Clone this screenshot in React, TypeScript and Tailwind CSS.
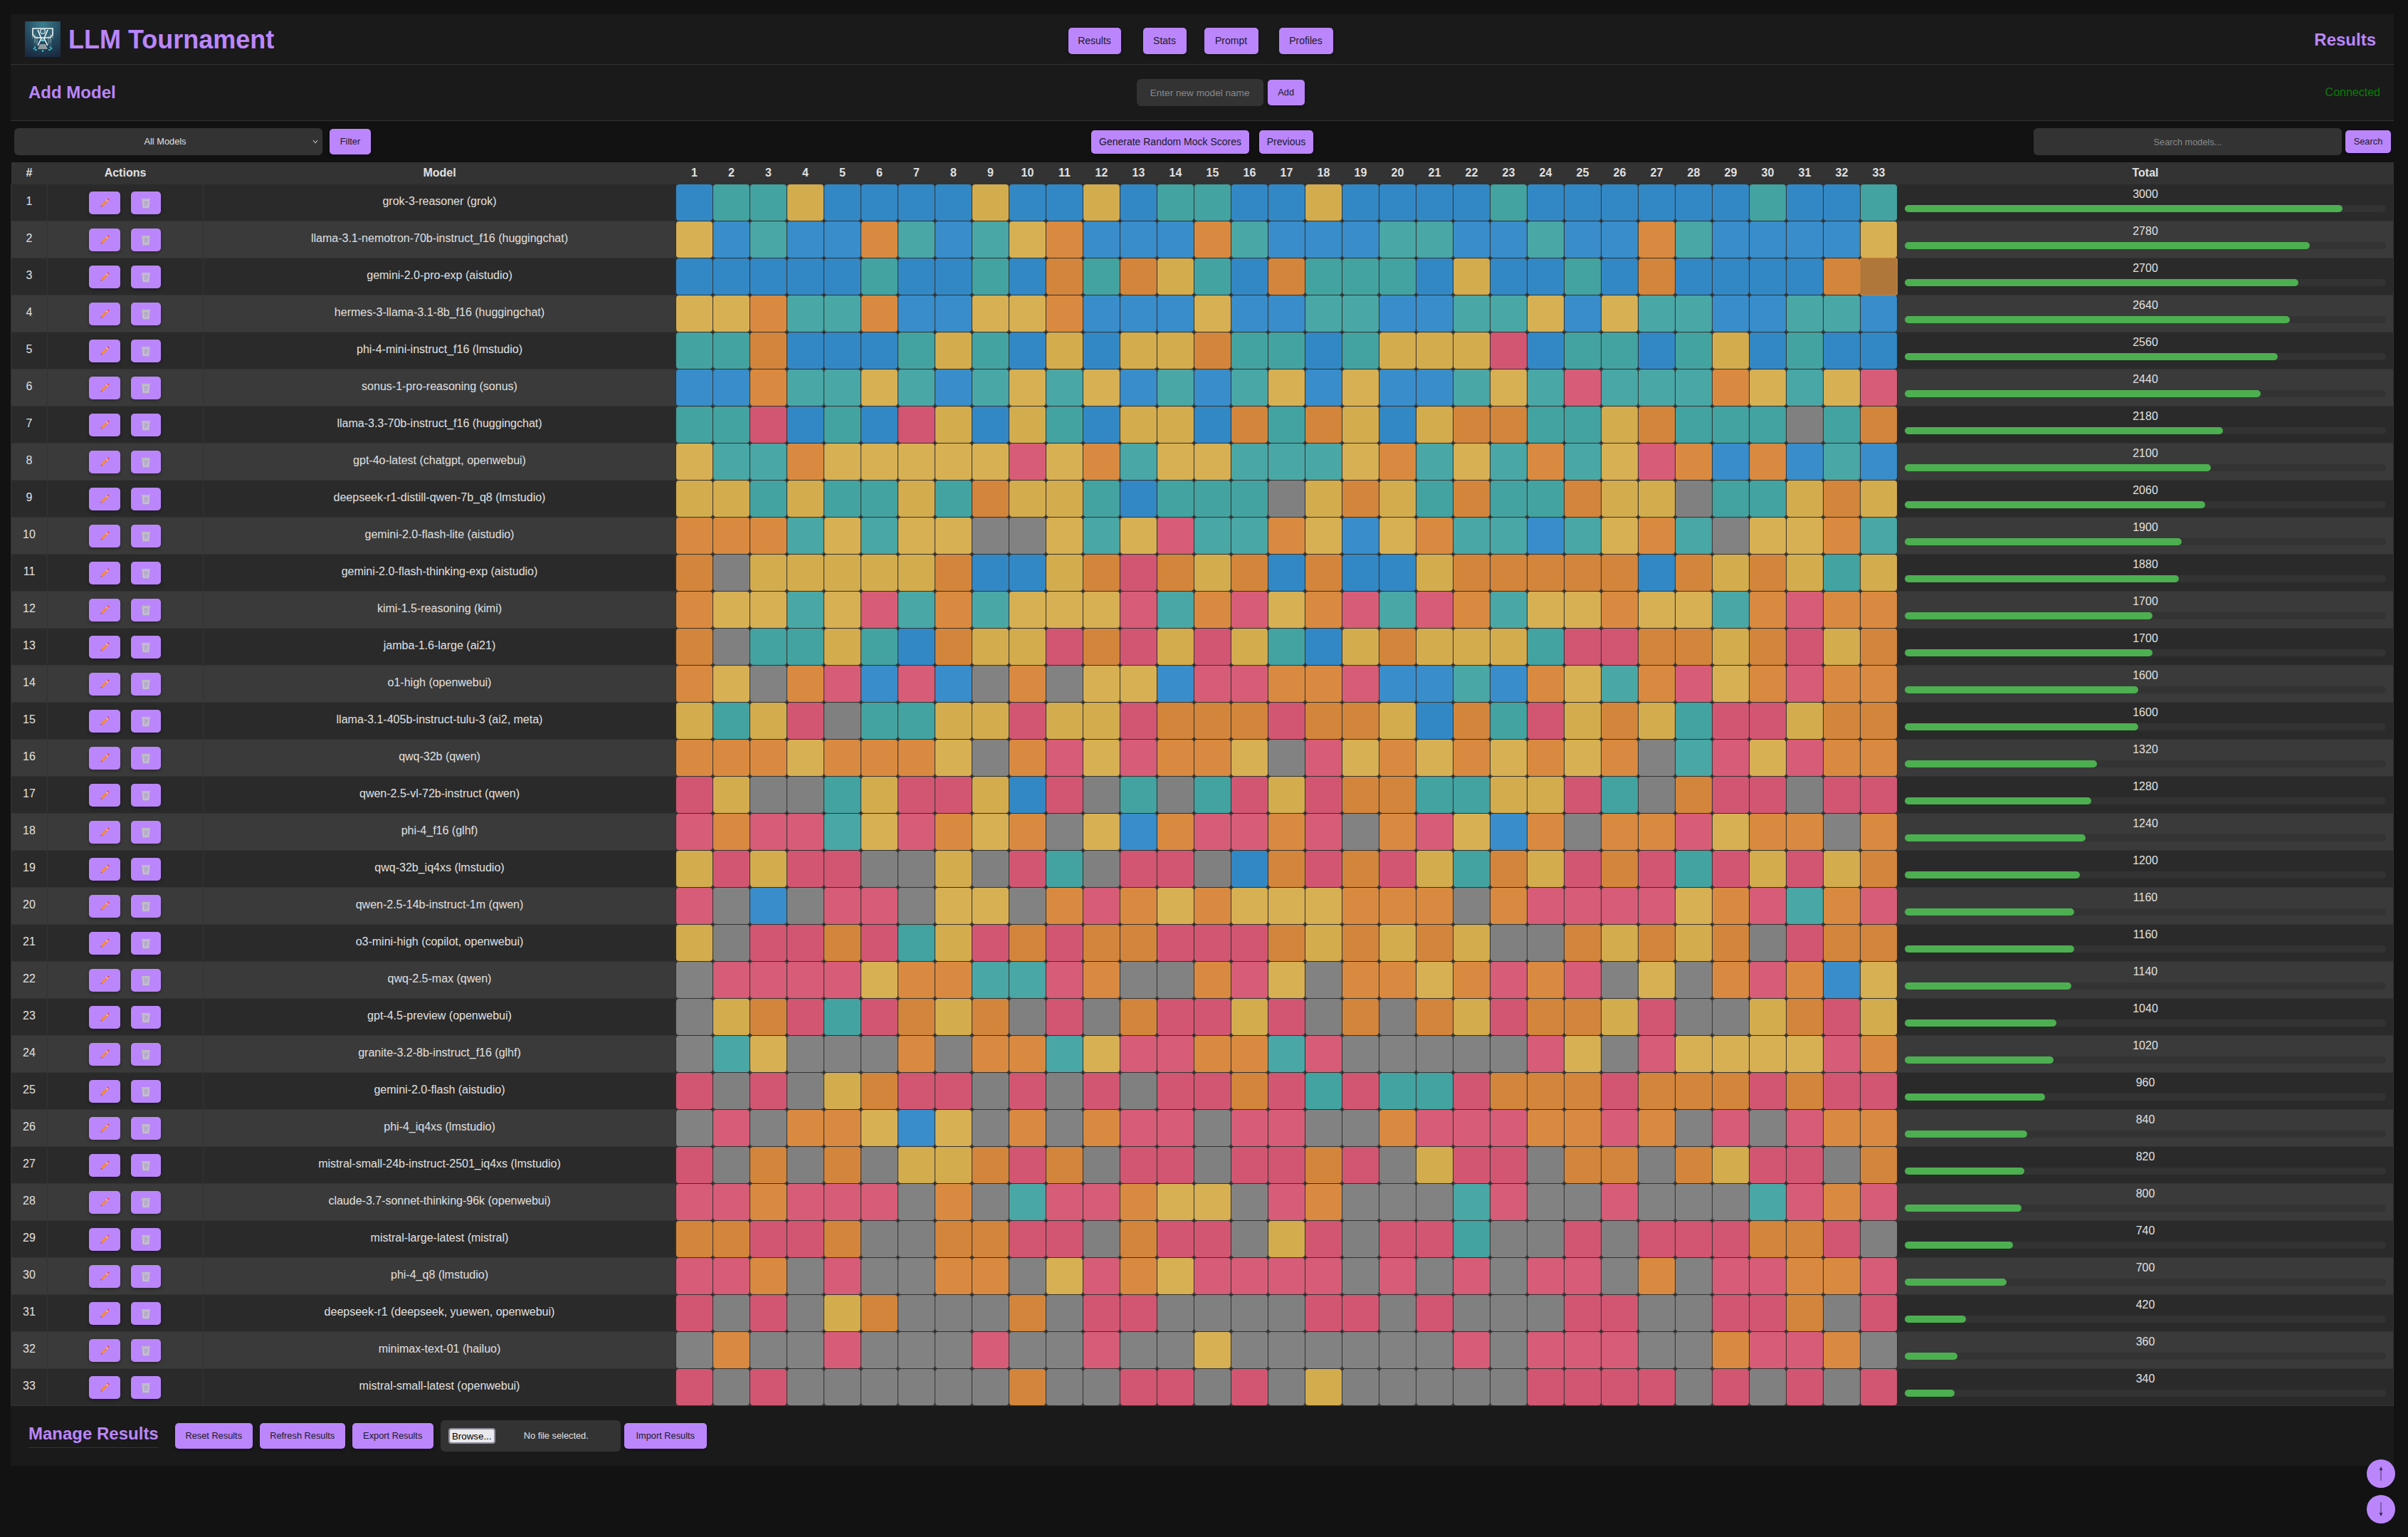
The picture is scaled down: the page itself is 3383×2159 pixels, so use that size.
const models = [
  { name: 'grok-3-reasoner (grok)', total: 3000, cells: 'BTTYBBBBYBBYBTTBBYBBBBTBBBBBBTBBT' },
  { name: 'llama-3.1-nemotron-70b-instruct_f16 (huggingchat)', total: 2780, cells: 'YBTBBOTBTYOBBBOTBBBTTBBTBBOTBBBBY' },
  { name: 'gemini-2.0-pro-exp (aistudio)', total: 2700, cells: 'BBBBBTBBTBOTOYTBOTTTBYBBTBOBBBBOO' },
  { name: 'hermes-3-llama-3.1-8b_f16 (huggingchat)', total: 2640, cells: 'YYOTTOBBYYOBBBYBBTTBBTTYBYTTBBTTB' },
  { name: 'phi-4-mini-instruct_f16 (lmstudio)', total: 2560, cells: 'TTOBBBTYTBYBYYOTTBTYYYPBTTBTYBTBB' },
  { name: 'sonus-1-pro-reasoning (sonus)', total: 2440, cells: 'BBOTTYTBTYTYBTBTYBYBBTYTPTTTOYTYP' },
  { name: 'llama-3.3-70b-instruct_f16 (huggingchat)', total: 2180, cells: 'TTPBTBPYBYTBYYBOTOYBYOOTTYOTTTGTO' },
  { name: 'gpt-4o-latest (chatgpt, openwebui)', total: 2100, cells: 'YTTOYYYYYPYOTYYTTTYOTYTOTYPOBOBTB' },
  { name: 'deepseek-r1-distill-qwen-7b_q8 (lmstudio)', total: 2060, cells: 'YYTYTTYTOYYTBTTTGYOYTOTTOYYGTTYOY' },
  { name: 'gemini-2.0-flash-lite (aistudio)', total: 1900, cells: 'OOOTYTYYGGYTYPTTOYBYOTTBTYOTGYYOT' },
  { name: 'gemini-2.0-flash-thinking-exp (aistudio)', total: 1880, cells: 'OGYYYYYOBBYOPOYOBOBBYOOOOOBOYOYTY' },
  { name: 'kimi-1.5-reasoning (kimi)', total: 1700, cells: 'OYYTYPTOTYYYPTOPYOPTPOTYYOYYTOPOO' },
  { name: 'jamba-1.6-large (ai21)', total: 1700, cells: 'OGTTYTBOYYPOPYPYTBYOYYYTPPOOYOPYO' },
  { name: 'o1-high (openwebui)', total: 1600, cells: 'OYGOPBPBGOGYYBPPOOPBBTBOYTOPYOPOO' },
  { name: 'llama-3.1-405b-instruct-tulu-3 (ai2, meta)', total: 1600, cells: 'YTYPGTTYYPYYPOOOPOOYBOTPYOYTPPYOO' },
  { name: 'qwq-32b (qwen)', total: 1320, cells: 'OOOYOOOYGOPYPOOYGPYOYOYOYOGTPYPOO' },
  { name: 'qwen-2.5-vl-72b-instruct (qwen)', total: 1280, cells: 'PYGGTYPPYBPGTGTPYPOOTTYYPTGOPPGPP' },
  { name: 'phi-4_f16 (glhf)', total: 1240, cells: 'POPPTYPOYOGYBOPPOPGOPYBOGOOPYOOGO' },
  { name: 'qwq-32b_iq4xs (lmstudio)', total: 1200, cells: 'YPYPPGGYGPTGPPGBOPOPYTOYPOPTPYPYO' },
  { name: 'qwen-2.5-14b-instruct-1m (qwen)', total: 1160, cells: 'PGBGPPGYYGOPOYOYYYOOOGOPPPPYOPTOP' },
  { name: 'o3-mini-high (copilot, openwebui)', total: 1160, cells: 'YGPPOPTYPOPOOPPPOYOYOYGGOYOYOGPOO' },
  { name: 'qwq-2.5-max (qwen)', total: 1140, cells: 'GPPPPYOOTTPOGGOPYGOOYOPOPGYGOPOBY' },
  { name: 'gpt-4.5-preview (openwebui)', total: 1040, cells: 'GYOPTPOYOGPGOPPYPGOGOYPOOYPGGYOPY' },
  { name: 'granite-3.2-8b-instruct_f16 (glhf)', total: 1020, cells: 'GTYGGGOGOOTYPPOOTPGGGGGPYGPYYYYPO' },
  { name: 'gemini-2.0-flash (aistudio)', total: 960, cells: 'PGPGYOPPGPGPGPPOPTPTTPOOOPOOOPOPP' },
  { name: 'phi-4_iq4xs (lmstudio)', total: 840, cells: 'GPGOOYBYGOGOPPGPPGGOPPPOOPOGPGPOO' },
  { name: 'mistral-small-24b-instruct-2501_iq4xs (lmstudio)', total: 820, cells: 'PGOGOGYYOPOGPPGPPOPGYPPGOOGOYPPGO' },
  { name: 'claude-3.7-sonnet-thinking-96k (openwebui)', total: 800, cells: 'PPOPPPGOGTPPOYYGPOGGGTPGGPGGGTPOP' },
  { name: 'mistral-large-latest (mistral)', total: 740, cells: 'OOPPOGGOOPPGOPPGYPGPPTGGPGPPPOOPG' },
  { name: 'phi-4_q8 (lmstudio)', total: 700, cells: 'PPOGPGGOOGYPOYPPPPGPGPGPPGOGPPOOP' },
  { name: 'deepseek-r1 (deepseek, yuewen, openwebui)', total: 420, cells: 'PGPGYOGGGOGPPGGGGPPGPGGGPPGGPPOGP' },
  { name: 'minimax-text-01 (hailuo)', total: 360, cells: 'GOGGPGGGPGGPGGYGGGGGGPGPPPGGOPPOG' },
  { name: 'mistral-small-latest (openwebui)', total: 340, cells: 'PGPGGGGGGOGGPPGPGYGGGGGPPPPGPGPGP' },
];

// [odd row, even row]
const cellColors: Record<string, [string, string]> = {
  B: ['bg-[#3288c5]', 'bg-[#398dca]'],
  T: ['bg-[#43a3a0]', 'bg-[#49a7a5]'],
  Y: ['bg-[#d3ac4e]', 'bg-[#d7b053]'],
  O: ['bg-[#d3853b]', 'bg-[#d98a40]'],
  P: ['bg-[#d25672]', 'bg-[#d75c77]'],
  G: ['bg-[#808080]', 'bg-[#828282]'],
};

const btn =
  'inline-flex items-center justify-center rounded-[5px] bg-[#bb86fc] text-[#1a1a2a] shadow-[0_2px_4px_rgba(0,0,0,0.3)]';
const field = 'rounded-[6px] bg-[#333] text-center text-[#e0e0e0] outline-none';
const rounds = Array.from({ length: 33 }, (_, i) => i + 1);

function Logo() {
  return (
    <svg viewBox="0 0 50 50" className="h-[50px] w-[50px] shrink-0">
      <defs>
        <radialGradient id="logoBg" cx="0.5" cy="0.1" r="0.95">
          <stop offset="0" stopColor="#3b7f8f" />
          <stop offset="0.55" stopColor="#24495e" />
          <stop offset="1" stopColor="#1b2a40" />
        </radialGradient>
      </defs>
      <rect width="50" height="50" fill="url(#logoBg)" />
      <path d="M12 11h4v25h-4zM34 11h4v25h-4z" fill="#2f6a78" opacity="0.5" />
      <path d="M11 16v8M14 18v12M17 20v12M33 20v12M36 18v12M39 16v8" stroke="#8fa7ad" strokeWidth="1" />
      <path d="M11 10h28v9l-4 4H15l-4-4z" fill="none" stroke="#eef3f4" strokeWidth="1.6" />
      <circle cx="25" cy="14" r="3.4" fill="none" stroke="#c9d6d9" strokeWidth="1.4" />
      <path d="M18 12l5 12-5 10M32 12l-5 12 5 10" fill="none" stroke="#f4f7f8" strokeWidth="1.6" />
      <path d="M21 32h8l3 7H18z" fill="#8b9a9f" />
      <path d="M15 36l-3 3M35 36l3 3M25 40v3M17 40h-3M33 40h3" stroke="#35b8c4" strokeWidth="2" />
      <path d="M22 28h6l-3-4z" fill="#5fd0da" />
    </svg>
  );
}

function PencilIcon() {
  return (
    <svg viewBox="0 0 14 14" className="h-[14px] w-[14px]">
      <path d="M2.6 9.2 9 2.8l2.2 2.2-6.4 6.4L1.6 12.4z" fill="#f88a2e" />
      <path d="M9 2.8l1-1 2.2 2.2-1 1z" fill="#e8d6d6" />
      <path d="M10 1.8l1-1c.4-.3 1-.3 1.4 0l.8.8c.3.4.3 1 0 1.4l-1 1z" fill="#ef5350" />
      <path d="M1.6 12.4l.5-1.6 1.1 1.1z" fill="#4a3a30" />
    </svg>
  );
}

function TrashIcon() {
  return (
    <svg viewBox="0 0 14 15" className="h-[15px] w-[14px]">
      <path d="M1 1h12v1.4H1z" fill="#c4c4c8" />
      <path d="M1.8 2.4h10.4l-.8 11.6H2.6z" fill="#cbbfe0" stroke="#b4b4b8" strokeWidth="1" />
      <path d="M4 4l2 8M6.5 4l-1 8M7.5 4l1.5 8M10 4l-2 8M5 4l4 5M9 5l-4 6" stroke="#9f9bab" strokeWidth="0.6" />
    </svg>
  );
}

function ScoreCell({ code, even, hovered }: { code: string; even: boolean; hovered: boolean }) {
  if (hovered) {
    return (
      <td className="border border-[#333] p-0">
        <div className="relative z-10 h-[51px] scale-105 rounded-[4px] border border-[#d08a40] border-b-[#c49a68] bg-[#b0773a]" />
      </td>
    );
  }
  return (
    <td className="border border-[#333] p-0">
      <div className={`h-[51px] rounded-[4px] ${cellColors[code][even ? 1 : 0]}`} />
    </td>
  );
}

export default function App() {
  return (
    <div className="min-h-screen bg-[#121212] pt-[20px] pr-[20px] pl-[15px] font-['Liberation_Sans',Arial,sans-serif] text-[16px] text-[#e0e0e0]">
      {/* Header */}
      <header className="grid h-[71px] grid-cols-[1fr_auto_1fr] items-center border-b border-[#333] bg-[#1a1a1a] pr-[25px] pl-[20px]">
        <div className="flex items-center gap-[11px]">
          <Logo />
          <h1 className="pt-[2px] text-[36px] font-bold text-[#bb86fc]">LLM Tournament</h1>
        </div>
        <nav className="mt-[5px] flex items-center text-[14px]">
          <a className={`${btn} h-[37px] w-[74px]`}>Results</a>
          <a className={`${btn} ml-[31px] h-[37px] w-[61px]`}>Stats</a>
          <a className={`${btn} ml-[25px] h-[37px] w-[76px]`}>Prompt</a>
          <a className={`${btn} ml-[29px] h-[37px] w-[76px]`}>Profiles</a>
        </nav>
        <h2 className="pt-[2px] text-right text-[24px] font-bold text-[#bb86fc]">Results</h2>
      </header>

      {/* Add model */}
      <section className="flex h-[79px] items-center justify-between border-b border-[#333] bg-[#1a1a1a] pr-[19px] pl-[25px]">
        <h2 className="text-[24px] font-bold text-[#bb86fc]">Add Model</h2>
        <div className="flex items-center gap-[6px]">
          <input
            placeholder="Enter new model name"
            className={`${field} h-[38px] w-[178px] text-[13.6px] placeholder:text-[#8a8a8a]`}
          />
          <button className={`${btn} h-[36px] w-[52px] text-[12.8px]`}>Add</button>
        </div>
        <span className="text-[#0a7a0a]">Connected</span>
      </section>

      {/* Toolbar */}
      <div className="flex h-[58px] items-center justify-between pr-[4px] pl-[5px] text-[12.8px]">
        <div className="flex items-center gap-[10px]">
          <div className="relative">
            <select className={`${field} h-[38px] w-[433px] appearance-none pr-[9px] text-[12.8px] [text-align-last:center]`}>
              <option>All Models</option>
            </select>
            <svg viewBox="0 0 8 6" className="pointer-events-none absolute top-[16px] right-[6px] h-[6px] w-[8px]">
              <path d="M1 1l3 4 3-4" fill="none" stroke="#e0e0e0" strokeWidth="1" />
            </svg>
          </div>
          <button className={`${btn} h-[36px] w-[58px]`}>Filter</button>
        </div>
        <div className="flex items-center gap-[14px] text-[14px]">
          <button className={`${btn} h-[33px] w-[222px]`}>Generate Random Mock Scores</button>
          <button className={`${btn} h-[33px] w-[76px]`}>Previous</button>
        </div>
        <div className="flex items-center gap-[5px]">
          <input
            placeholder="Search models..."
            className={`${field} h-[38px] w-[433px] text-[12.8px] placeholder:text-[#8a8a8a]`}
          />
          <button className={`${btn} h-[32px] w-[64px]`}>Search</button>
        </div>
      </div>

      {/* Results table */}
      <table className="w-[3348px] table-fixed border-collapse">
        <colgroup>
          <col className="w-[51px]" />
          <col className="w-[219px]" />
          <col className="w-[664px]" />
          {rounds.map((r) => (
            <col key={r} className="w-[52px]" />
          ))}
          <col />
        </colgroup>
        <thead>
          <tr className="h-[30px] bg-[#333] font-bold">
            <th className="p-0">#</th>
            <th className="p-0">Actions</th>
            <th className="p-0">Model</th>
            {rounds.map((r) => (
              <th key={r} className="p-0">
                {r}
              </th>
            ))}
            <th className="p-0">Total</th>
          </tr>
        </thead>
        <tbody>
          {models.map((m, i) => {
            const even = i % 2 === 1;
            return (
              <tr key={m.name} className={even ? 'bg-[#3a3a3a]' : 'bg-[#2a2a2a]'}>
                <td className="border border-[#333] p-0 pb-[2px] text-center">{i + 1}</td>
                <td className="border border-[#333] p-0">
                  <div className="flex items-center justify-center gap-[15px] pt-[2px] pr-[1px]">
                    <button className={`${btn} h-[32px] w-[44px]`}>
                      <PencilIcon />
                    </button>
                    <button className={`${btn} h-[32px] w-[42px]`}>
                      <TrashIcon />
                    </button>
                  </div>
                </td>
                <td className="border border-[#333] p-0 pb-[2px] text-center">{m.name}</td>
                {m.cells.split('').map((c, j) => (
                  <ScoreCell key={j} code={c} even={even} hovered={i === 2 && j === 32} />
                ))}
                <td className="border border-[#333] p-0 px-[10px] pb-[6px] text-center">
                  <div className="leading-[18px]">{m.total}</div>
                  <div className="mt-[6px] h-[10px] rounded-[5px] bg-[#333]">
                    <div
                      className="h-full rounded-[5px] bg-[#4caf50]"
                      style={{ width: `${(m.total / 3300) * 100}%` }}
                    />
                  </div>
                </td>
              </tr>
            );
          })}
        </tbody>
      </table>

      {/* Manage results */}
      <section className="flex h-[84px] items-center bg-[#1a1a1a] pl-[25px] text-[12.8px]">
        <h2 className="mr-[23px] border-b border-[#333] pb-[5px] text-[24px] leading-[29px] font-bold text-[#bb86fc]">
          Manage Results
        </h2>
        <button className={`${btn} h-[36px] w-[109px]`}>Reset Results</button>
        <button className={`${btn} ml-[10px] h-[36px] w-[120px]`}>Refresh Results</button>
        <button className={`${btn} ml-[10px] h-[36px] w-[114px]`}>Export Results</button>
        <div className="ml-[10px] flex h-[44px] w-[253px] items-center rounded-[6px] bg-[#333] pl-[11px]">
          <button className="h-[22px] w-[66px] rounded-[4px] border-2 border-[#8f8f9d] bg-[#e9e9ed] text-[13.33px] text-black">
            Browse...
          </button>
          <span className="ml-[40px]">No file selected.</span>
        </div>
        <button className={`${btn} ml-[5px] h-[36px] w-[116px]`}>Import Results</button>
      </section>

      {/* Scroll buttons */}
      <button className="fixed top-[2050px] right-[18px] flex h-[40px] w-[40px] items-center justify-center rounded-full bg-[#bb86fc]">
        <svg viewBox="0 0 12 22" className="h-[22px] w-[12px]">
          <path d="M6 3v18" fill="none" stroke="#2a2040" strokeWidth="0.8" />
          <path d="M6 1 3.6 6.5 6 5.6l2.4.9z" fill="#2a2040" />
        </svg>
      </button>
      <button className="fixed top-[2100px] right-[18px] flex h-[40px] w-[40px] items-center justify-center rounded-full bg-[#bb86fc]">
        <svg viewBox="0 0 12 22" className="h-[22px] w-[12px]">
          <path d="M6 19V1" fill="none" stroke="#2a2040" strokeWidth="0.8" />
          <path d="M6 21 3.6 15.5l2.4.9 2.4-.9z" fill="#2a2040" />
        </svg>
      </button>
    </div>
  );
}
